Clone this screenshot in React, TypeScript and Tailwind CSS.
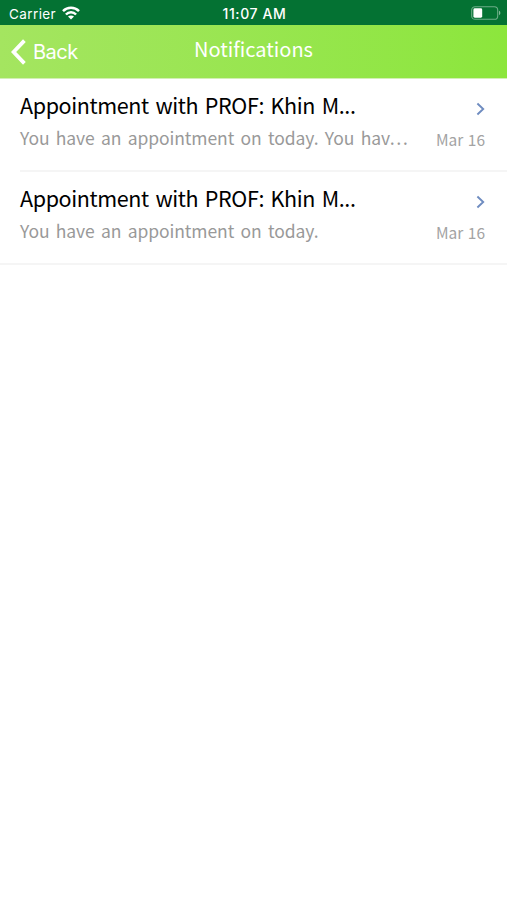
import React from "react";

interface Notification {
  id: number;
  title: string;
  message: string;
  date: string;
}

const NOTIFICATIONS: Notification[] = [
  {
    id: 1,
    title: "Appointment with PROF: Khin M...",
    message: "You have an appointment on today. You hav…",
    date: "Mar 16",
  },
  {
    id: 2,
    title: "Appointment with PROF: Khin M...",
    message: "You have an appointment on today.",
    date: "Mar 16",
  },
];

const WifiIcon = () => (
  <svg width="18" height="14" viewBox="0 0 18 14" fill="none" stroke="#fff" strokeWidth="2.5">
    <path d="M1 5.1C5.4 0.7 12.6 0.7 17 5.1" />
    <path d="M3.9 8.5C6.8 5.5 11.2 5.5 14.1 8.5" />
    <path d="M9 13.6L6 10.6C7.7 9.1 10.3 9.1 12 10.6Z" fill="#fff" stroke="none" />
  </svg>
);

const BatteryIcon = () => (
  <svg width="30" height="14" viewBox="0 0 30 14" fill="none">
    <rect x="0.7" y="0.7" width="26" height="12.6" rx="3.4" stroke="#fff" strokeOpacity="0.42" strokeWidth="1.1" />
    <rect x="2.4" y="2.3" width="8.8" height="9.4" rx="1.4" fill="#fff" />
    <path d="M28 4.8C29.8 5.4 29.8 8.6 28 9.2Z" fill="#fff" fillOpacity="0.5" />
  </svg>
);

const StatusBar = () => (
  <div className="grid h-[25px] grid-cols-3 items-center bg-[#047233] pl-[8px] pr-[6px] font-['Inter',sans-serif] text-white">
    <div className="flex items-center gap-[6px] pl-px">
      <span className="text-[13.5px] leading-[23px] tracking-[0.4px] pt-[3px]">Carrier</span>
      <WifiIcon />
    </div>
    <span className="text-center text-[14px] font-medium leading-[23px] tracking-[0.6px] whitespace-nowrap">
      11:07 AM
    </span>
    <div className="flex justify-end">
      <BatteryIcon />
    </div>
  </div>
);

const NavBar = () => (
  <header className="grid h-[54px] grid-cols-3 items-center border-b border-[#d3efb5] bg-linear-to-r from-[#a4e560] to-[#8ce63c] text-white">
    <button className="flex items-center gap-[7px] pl-[11px] font-['Inter',sans-serif]">
      <svg width="15" height="26" viewBox="0 0 15 26" fill="none" stroke="#fff" strokeWidth="3.8">
        <path d="M13.4 1.6L2.6 13L13.4 24.4" />
      </svg>
      <span className="text-[20px] leading-[26px] tracking-[-0.5px]">Back</span>
    </button>
    <h1 className="pb-[6px] text-center text-[20px] leading-[28px]">Notifications</h1>
  </header>
);

const NotificationRow: React.FC<{ item: Notification; last: boolean }> = ({ item, last }) => (
  <li className={last ? "border-b-2 border-[#f5f5f5] pl-[20px]" : "pl-[20px]"}>
    <div
      className={`flex justify-between pr-[22px] ${last ? "h-[91px]" : "h-[93px] border-b-2 border-[#f5f5f5]"}`}
    >
      <div className="flex flex-col pt-[11px]">
        <h2 className="text-[21.5px] leading-[30px] tracking-[-0.38px] [word-spacing:2.2px] text-black whitespace-nowrap">
          {item.title}
        </h2>
        <p className="mt-[3px] text-[17.5px] leading-[30px] tracking-[-0.1px] [word-spacing:2.6px] text-[#999] whitespace-nowrap">
          {item.message}
        </p>
      </div>
      <div className="flex flex-col items-end">
        <svg className="mt-[23px]" width="9" height="14" viewBox="0 0 9 14" fill="none" stroke="#6f8cc0" strokeWidth="1.9">
          <path d="M1.4 1.5L7.2 7L1.4 12.5" />
        </svg>
        <span className="mt-[11px] text-[15.5px] leading-[24px] [word-spacing:1px] text-[#a3a3a3] whitespace-nowrap">
          {item.date}
        </span>
      </div>
    </div>
  </li>
);

const App: React.FC = () => {
  return (
    <div className="min-h-screen w-full bg-white font-['Noto_Sans_CJK_SC',sans-serif]">
      <StatusBar />
      <NavBar />
      <ul>
        {NOTIFICATIONS.map((item, i) => (
          <NotificationRow key={item.id} item={item} last={i === NOTIFICATIONS.length - 1} />
        ))}
      </ul>
    </div>
  );
};

export default App;
